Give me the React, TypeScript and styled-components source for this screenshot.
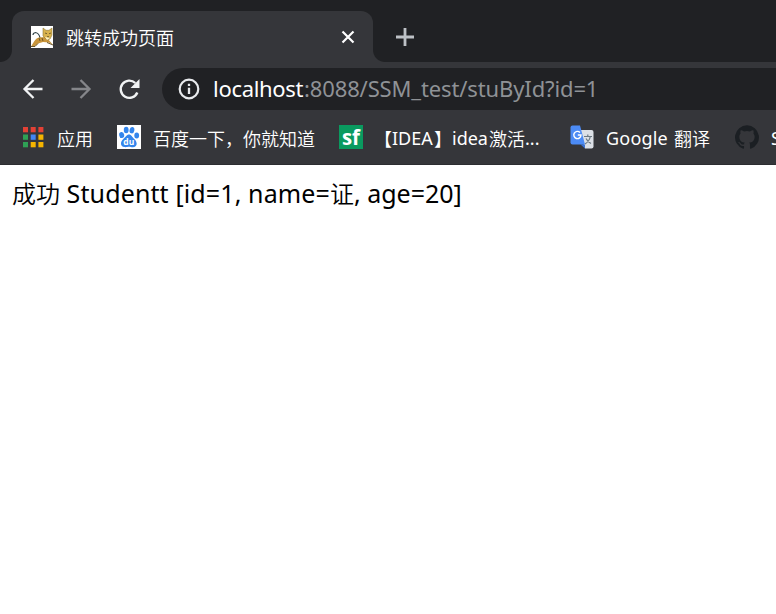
import React from "react";
import styled, { createGlobalStyle } from "styled-components";

const GlobalStyle = createGlobalStyle`
  * { box-sizing: border-box; }
  html, body { margin: 0; background: #fff; }
  body { overflow: hidden; font-family: "Noto Sans", "Noto Sans CJK SC", sans-serif; }
  svg { display: block; flex: none; }
`;

const Browser = styled.div`
  width: 776px;
  height: 614px;
  overflow: hidden;
  display: flex;
  flex-direction: column;
  background: #fff;
`;

const TabStrip = styled.header`
  height: 62px;
  flex: none;
  display: flex;
  align-items: flex-end;
  background: #202124;
`;

const Flare = styled.div<{ $side: "left" | "right" }>`
  width: 12px;
  height: 12px;
  background: radial-gradient(
    circle at ${(p) => (p.$side === "left" ? "0 0" : "100% 0")},
    transparent 11.5px,
    #35363a 12.5px
  );
`;

const Tab = styled.div`
  width: 361px;
  height: 51px;
  padding: 0 17px 0 19px;
  display: flex;
  align-items: center;
  background: #35363a;
  border-radius: 12px 12px 0 0;
`;

const TabTitle = styled.span`
  flex: 1;
  margin-left: 13px;
  font-family: "Noto Sans CJK SC", sans-serif;
  font-size: 18px;
  line-height: 26px;
  font-weight: 350;
  color: #fff;
  white-space: nowrap;
`;

const NewTab = styled.div`
  height: 51px;
  margin-left: 10px;
  display: flex;
  align-items: center;
`;

const Toolbar = styled.nav`
  height: 53px;
  flex: none;
  display: flex;
  align-items: center;
  padding-left: 21px;
  background: #35363a;
`;

const NavButton = styled.div`
  width: 24px;
  height: 24px;
  margin-right: 24px;
`;

const Omnibox = styled.div`
  flex: 1;
  height: 42px;
  margin: 1px 0 0 -3px;
  padding-left: 16px;
  display: flex;
  align-items: center;
  background: #202124;
  border-radius: 21px 0 0 21px;
`;

const Url = styled.div`
  margin: -2px 0 0 13px;
  display: flex;
  font-size: 22px;
  line-height: 30px;
  white-space: nowrap;
`;

const Run = styled.span<{ $spacing?: number; $color?: string; $width?: number }>`
  display: inline-block;
  white-space: pre;
  letter-spacing: ${(p) => p.$spacing ?? 0}px;
  width: ${(p) => (p.$width ? `${p.$width}px` : "auto")};
  color: ${(p) => p.$color ?? "inherit"};
`;

const BookmarkBar = styled.nav`
  height: 50px;
  flex: none;
  display: flex;
  align-items: center;
  padding: 0 0 5px 21px;
  overflow: hidden;
  background: #35363a;
  border-bottom: 1px solid #2c2d31;
`;

const Bookmark = styled.div<{ $width: number; $gap: number }>`
  width: ${(p) => p.$width}px;
  flex: none;
  display: flex;
  align-items: center;
  gap: ${(p) => p.$gap}px;
`;

const Label = styled.span`
  display: flex;
  margin-top: 2px;
  font-size: 18px;
  line-height: 26px;
  color: #fff;
  white-space: nowrap;
`;

const Cjk = styled.span`
  font-family: "Noto Sans CJK SC", sans-serif;
  font-weight: 350;
`;

const Page = styled.main`
  padding: 11px 12px;
  display: flex;
  align-items: baseline;
  font-size: 25px;
  line-height: 34px;
  color: #000;

  ${Cjk} {
    font-size: 24px;
  }
`;

const TomcatIcon = () => (
  <svg width="22" height="22" viewBox="0 0 22 22">
    <path fill="#fff" d="M0 0h22v22H0z" />
    <path d="M9 12C8.500 9 7 7 4.500 6.500Q2 7 2 9" fill="none" stroke="#34464b" strokeWidth="1.200" />
    <path d="M0 20.500C2 18 4 12 8 11.500L14 11l3 2 5 6-4-2.500-6-.5-5 1.500-3 2.500Z" fill="#c9953b" />
    <path d="M0 20.500h4l3-3M16 16.500l6 2.500" fill="none" stroke="#59461d" strokeWidth=".9" />
    <path d="m12 2 3 2.300h3L21 2v7l-2 4-3 1-4-4Z" fill="#d9b34e" stroke="#8d793b" strokeWidth=".6" />
    <path d="m14 7 2 .7m4-.7-2 .7m-2 3h2M8 12l1 3m2-3 1 3" stroke="#4a4020" strokeWidth=".7" />
    <path d="m14 11 2 3 3-2" fill="#fff4c8" />
  </svg>
);

const appColors = ["#e34135", "#e34135", "#e34135", "#2fa155", "#4285f4", "#f5b400", "#2fa155", "#f5b400", "#f5b400"];

const AppsIcon = () => (
  <svg width="24" height="24" viewBox="0 0 24 24">
    {appColors.map((color, i) => (
      <rect key={i} x={2 + (i % 3) * 7.7} y={2 + Math.floor(i / 3) * 7.5} width="5" height="5.300" fill={color} />
    ))}
  </svg>
);

const BaiduIcon = () => (
  <svg width="24" height="24" viewBox="0 0 24 24">
    <path fill="#fff" d="M0 0h24v24H0z" />
    <g fill="#3385ec">
      <ellipse cx="4.700" cy="10" rx="2.500" ry="3.100" transform="rotate(-10 4.700 10)" />
      <ellipse cx="9.200" cy="5" rx="2.400" ry="3.200" />
      <ellipse cx="15" cy="5.200" rx="2.400" ry="3.200" transform="rotate(12 15 5)" />
      <ellipse cx="19.700" cy="10.500" rx="2.400" ry="3" />
      <path d="M12 9.500c2.500 0 3 2.500 5 4.300 4 3.500 3.500 8.200-1 8.400-2 0-2.500-.5-4-.5s-2.500.6-4.500.4c-4.500-.5-4.500-5.300-1-8.300C8.700 12 9.500 9.500 12 9.500Z" />
    </g>
    <text x="11.800" y="20.300" textAnchor="middle" fontFamily="Open Sans, sans-serif" fontWeight="700" fontSize="8.500" fill="#fff">du</text>
  </svg>
);

const SegmentFaultIcon = () => (
  <svg width="24" height="24" viewBox="0 0 24 24">
    <path fill="#0a9a5f" d="M0 0h24v24H0z" />
    <text x="12" y="19.500" textAnchor="middle" fontFamily="Open Sans, sans-serif" fontWeight="700" fontSize="21" textLength="18" lengthAdjust="spacingAndGlyphs" fill="#fff">sf</text>
  </svg>
);

const TranslateIcon = () => (
  <svg width="24" height="24" viewBox="0 0 24 24">
    <path fill="#dce0e6" d="M9 5h12.500q2 0 2 2v14.500q0 2-2 2H15Z" />
    <path d="M14 11.500h8M17.800 9.500v2M20.300 11.500c-.8 4-3 6-5.300 7.500M16 13.500c1 2 3 4 5 5" fill="none" stroke="#6b7882" strokeWidth="1.200" />
    <path fill="#3b70cf" d="M10.500 19.500H15v4Z" />
    <path fill="#4c8bf5" d="M2.500.5H10l5 19H2.500q-2 0-2-2v-15q0-2 2-2Z" />
    <path d="M10 7.500A3.600 3.600 0 1 0 11 10H7.800" fill="none" stroke="#fff" strokeWidth="1.400" />
  </svg>
);

const GithubIcon = () => (
  <svg width="24" height="24" viewBox="0 0 24 24" fill="#1b1f23">
    <path d="M12 .3a12 12 0 0 0-3.800 23.380c.6.120.830-.260.830-.570v-2.230c-3.340.730-4.040-1.420-4.040-1.420-.550-1.380-1.330-1.750-1.330-1.750-1.090-.740.080-.730.080-.730 1.200.090 1.840 1.240 1.840 1.240 1.070 1.830 2.800 1.300 3.490 1 .1-.780.420-1.310.760-1.610-2.670-.3-5.470-1.330-5.470-5.930 0-1.310.470-2.380 1.240-3.220-.140-.3-.540-1.520.1-3.180 0 0 1-.320 3.300 1.230a11.500 11.500 0 0 1 6 0c2.280-1.550 3.290-1.230 3.290-1.230.640 1.660.240 2.880.120 3.180a4.650 4.650 0 0 1 1.230 3.220c0 4.610-2.800 5.630-5.480 5.920.420.360.810 1.100.810 2.220v3.290c0 .320.190.690.8.570A12 12 0 0 0 12 .3" />
  </svg>
);

export default function App() {
  return (
    <Browser>
      <GlobalStyle />
      <TabStrip>
        <Flare $side="left" />
        <Tab>
          <TomcatIcon />
          <TabTitle>跳转成功页面</TabTitle>
          <svg width="16" height="16" viewBox="0 0 16 16">
            <path d="m2.500 2.500 11 11m0-11-11 11" stroke="#fff" strokeWidth="2.200" />
          </svg>
        </Tab>
        <Flare $side="right" />
        <NewTab>
          <svg width="20" height="20" viewBox="0 0 20 20">
            <path d="M1 10h18M10 1v18" stroke="#bdc1c6" strokeWidth="2.800" />
          </svg>
        </NewTab>
      </TabStrip>
      <Toolbar>
        <NavButton>
          <svg width="24" height="24" viewBox="0 0 24 24">
            <path d="M21.500 12H3.500M12.500 3 3.500 12l9 9" fill="none" stroke="#f1f3f4" strokeWidth="2.300" />
          </svg>
        </NavButton>
        <NavButton>
          <svg width="24" height="24" viewBox="0 0 24 24">
            <path d="M2.500 12h18M11.500 3l9 9-9 9" fill="none" stroke="#85868a" strokeWidth="2.300" />
          </svg>
        </NavButton>
        <NavButton>
          <svg width="24" height="24" viewBox="0 0 24 24">
            <path d="M20.300 15.500A8.600 8.600 0 1 1 18.300 6" fill="none" stroke="#f1f3f4" strokeWidth="2.400" />
            <path d="M22.500 2v9h-9Z" fill="#f1f3f4" />
          </svg>
        </NavButton>
        <Omnibox>
          <svg width="22" height="22" viewBox="0 0 22 22">
            <circle cx="11" cy="11" r="9.300" fill="none" stroke="#e8eaed" strokeWidth="2.200" />
            <path d="M11 9.800v6.200M11 5.800v2.300" stroke="#e8eaed" strokeWidth="2.300" />
          </svg>
          <Url>
            <Run $color="#fff" $spacing={-0.3} $width={91}>localhost</Run>
            <Run $color="#8f9296" $spacing={-0.13}>:8088/SSM_test/stuById?id=1</Run>
          </Url>
        </Omnibox>
      </Toolbar>
      <BookmarkBar>
        <Bookmark $width={96} $gap={12}>
          <AppsIcon />
          <Label><Cjk>应用</Cjk></Label>
        </Bookmark>
        <Bookmark $width={222} $gap={12}>
          <BaiduIcon />
          <Label><Cjk>百度一下，你就知道</Cjk></Label>
        </Bookmark>
        <Bookmark $width={231} $gap={11}>
          <SegmentFaultIcon />
          <Label>
            <Cjk>【</Cjk>
            <Run $width={42}>IDEA</Run>
            <Cjk>】</Cjk>
            <Run $width={37}>idea</Run>
            <Cjk>激活</Cjk>
            <Run>...</Run>
          </Label>
        </Bookmark>
        <Bookmark $width={165} $gap={12}>
          <TranslateIcon />
          <Label>
            <Run $spacing={0.2} $width={68}>Google</Run>
            <Cjk>翻译</Cjk>
          </Label>
        </Bookmark>
        <Bookmark $width={60} $gap={12}>
          <GithubIcon />
          <Label>S</Label>
        </Bookmark>
      </BookmarkBar>
      <Page>
        <Cjk>成功</Cjk>
        <Run $spacing={0.12} $width={270}> Studentt [id=1, name=</Run>
        <Cjk>证</Cjk>
        <Run>, age=20]</Run>
      </Page>
    </Browser>
  );
}
